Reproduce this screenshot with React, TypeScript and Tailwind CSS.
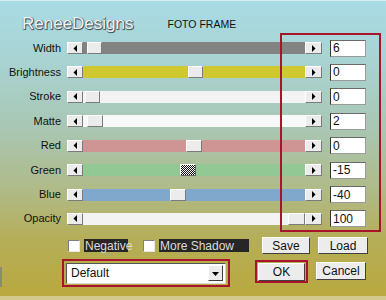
import React from "react";

type Row = {
  label: string;
  value: string;
  track: string;
  thumbAt: number;
  thumbW: number;
  checker?: boolean;
};

const rows: Row[] = [
  { label: "Width", value: "6", track: "bg-[#838383]", thumbAt: 4, thumbW: 15 },
  { label: "Brightness", value: "0", track: "bg-[#cfc82e]", thumbAt: 105, thumbW: 15 },
  { label: "Stroke", value: "0", track: "bg-[#f3f3f3]", thumbAt: 2, thumbW: 15 },
  { label: "Matte", value: "2", track: "bg-[#f8f8f8]", thumbAt: 4, thumbW: 16 },
  { label: "Red", value: "0", track: "bg-[#cf9494]", thumbAt: 103, thumbW: 16 },
  { label: "Green", value: "-15", track: "bg-[#92c894]", thumbAt: 97, thumbW: 16, checker: true },
  { label: "Blue", value: "-40", track: "bg-[#80a8cc]", thumbAt: 87, thumbW: 16 },
  { label: "Opacity", value: "100", track: "bg-[#f3f3f3]", thumbAt: 205, thumbW: 17 },
];

// raised win9x style bevel
const raised =
  "bg-[#ececec] border border-t-white border-l-white border-r-[#7a7a7a] border-b-[#7a7a7a]";

const Arrow = ({ dir }: { dir: "l" | "r" | "d" }) => (
  <svg width="7" height="7" viewBox="0 0 7 7">
    {dir === "l" && <polygon points="5,0 5,7 1.5,3.5" fill="#000" />}
    {dir === "r" && <polygon points="2,0 2,7 5.5,3.5" fill="#000" />}
    {dir === "d" && <polygon points="0,2 7,2 3.5,6" fill="#000" />}
  </svg>
);

const SliderRow = ({ row }: { row: Row }) => (
  <div className="flex h-[24.43px] items-center">
    <div className="w-[61px] text-right text-[11px] leading-none text-[#111]">{row.label}</div>
    {/* left arrow */}
    <div className={`ml-[6px] flex h-[12px] w-[16px] items-center justify-center ${raised}`}>
      <Arrow dir="l" />
    </div>
    {/* track */}
    <div className={`flex h-[12px] w-[222px] items-center ${row.track}`}>
      <div style={{ width: row.thumbAt }} className="h-full shrink-0" />
      <div
        style={{ width: row.thumbW }}
        className={
          row.checker
            ? "h-[12px] shrink-0 border border-t-white border-l-white border-r-[#6a6a6a] border-b-[#6a6a6a] bg-[repeating-conic-gradient(#111_0_25%,#fff_0_50%)] bg-[length:2px_2px]"
            : `h-[12px] shrink-0 ${raised}`
        }
      />
    </div>
    {/* right arrow */}
    <div className={`flex h-[12px] w-[17px] items-center justify-center ${raised}`}>
      <Arrow dir="r" />
    </div>
    <div className="ml-[8px] flex h-[17px] w-[36px] items-center border border-[#9a9a9a] border-l-[#333] border-t-[#6a6a6a] bg-white pl-[2px] text-[12px] leading-none text-[#111]">
      {row.value}
    </div>
  </div>
);

const Btn = ({ children, w }: { children: React.ReactNode; w: string }) => (
  <div className={`flex h-[17px] items-center justify-center text-[12px] leading-none text-[#111] ${w} ${raised} border-r-[#404040] border-b-[#404040]`}>
    {children}
  </div>
);

const Check = ({ label, w }: { label: string; w: string }) => (
  <div className="flex items-center">
    <div className="h-[12px] w-[12px] border border-[#e8e8e8] border-l-[#808080] border-t-[#808080] bg-white" />
    <div className={`ml-[4px] flex h-[13px] items-center bg-[#262626] pl-[1px] text-[12px] leading-none text-[#dcdcdc] ${w}`}>
      {label}
    </div>
  </div>
);

export default function App() {
  return (
    <div className="relative flex h-[300px] w-[386px] flex-col overflow-hidden border-t border-t-[#d8eef2] bg-[linear-gradient(180deg,#a9dbe5_0%,#a8d3d2_20%,#a9c7b4_42%,#afbb8a_62%,#b5ae58_80%,#b9a83c_100%)] font-['Liberation_Sans',Arial,sans-serif]">
      {/* title */}
      <div className="flex h-[34.8px] items-start">
        <div className="ml-[22px] mt-[13px] text-[17px] leading-[20px] text-[#eef3f3] [text-shadow:1px_1px_0_#4c5a5c,1px_0_0_#6a7678,0_1px_1px_#4c5a5c]">
          ReneeDesigns
        </div>
        <div className="ml-[34px] mt-[17px] text-[10.5px] leading-[12px] text-[#111]">FOTO FRAME</div>
      </div>

      <div className="flex flex-col">
        {rows.map((r) => (
          <SliderRow key={r.label} row={r} />
        ))}
      </div>

      {/* checkboxes + save/load */}
      <div className="mt-[6px] flex h-[17px] items-center">
        <div className="ml-[68px]">
          <Check label="Negative" w="w-[44px]" />
        </div>
        <div className="ml-[15px]">
          <Check label="More Shadow" w="w-[90px]" />
        </div>
        <div className="ml-[13px]">
          <Btn w="w-[48px]">Save</Btn>
        </div>
        <div className="ml-[8px]">
          <Btn w="w-[50px]">Load</Btn>
        </div>
      </div>

      {/* dropdown + ok/cancel */}
      <div className="mt-[5px] flex items-start">
        <div className="mt-[8px] h-[20px] w-[2px] bg-[#8a8a70]" />
        <div className="ml-[60px] flex h-[28px] w-[168px] items-center justify-center border-2 border-[#a8142c]">
          <div className="flex h-[21px] w-[160px] items-center border border-[#d8d8d8] border-l-[#555] border-t-[#555] bg-white">
            <div className="flex-1 pl-[4px] text-[12px] leading-none text-[#111]">Default</div>
            <div className={`mr-[2px] flex h-[16px] w-[15px] items-center justify-center ${raised} border-r-[#404040] border-b-[#404040]`}>
              <Arrow dir="d" />
            </div>
          </div>
        </div>
        <div className="ml-[25px] mt-[1px] flex h-[23px] w-[53px] items-center justify-center border-2 border-[#a8142c]">
          <Btn w="w-[47px] h-[18px]">OK</Btn>
        </div>
        <div className="ml-[8px] mt-[3px]">
          <Btn w="w-[50px] h-[18px]">Cancel</Btn>
        </div>
      </div>

      <div className="mt-auto h-[4px] bg-[#d3c98e]" />

      {/* red highlight drawn over the value column */}
      <div className="pointer-events-none absolute left-[280px] top-[32px] h-[199px] w-[101px] border-2 border-[#a8142c]" />
    </div>
  );
}
